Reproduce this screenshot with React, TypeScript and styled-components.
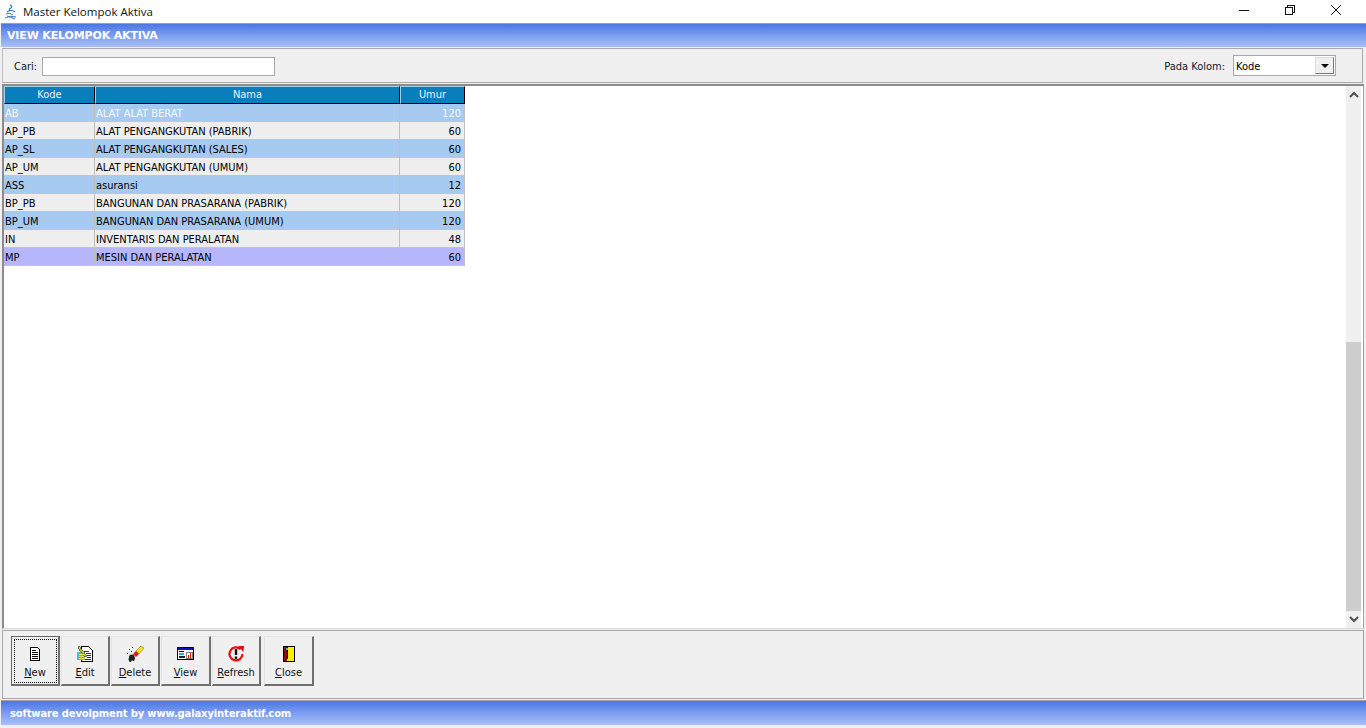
import React from 'react';
import styled, { createGlobalStyle } from 'styled-components';

const GlobalStyle = createGlobalStyle`
  html, body {
    margin: 0;
    padding: 0;
    background: #f0f0f0;
    overflow: hidden;
  }
`;

const UI_FONT = `"DejaVu Sans Condensed", "DejaVu Sans", sans-serif`;
const BOLD_FONT = `"DejaVu Sans", Verdana, sans-serif`;

const Window = styled.div`
  width: 1366px;
  height: 728px;
  display: flex;
  flex-direction: column;
  background: #f0f0f0;
  font-family: ${UI_FONT};
  font-stretch: condensed;
  font-size: 11px;
  color: #000;
`;

const TitleBar = styled.div`
  height: 23px;
  display: flex;
  align-items: center;
  background: #fff;
  padding: 0 7px 0 4px;
`;

const TitleText = styled.span`
  font-family: "Open Sans", sans-serif;
  font-stretch: normal;
  font-size: 11.5px;
  color: #111;
  margin-left: 5px;
  flex: 1;
`;

const WinButton = styled.div`
  width: 46px;
  height: 23px;
  padding-bottom: 3px;
  box-sizing: border-box;
  display: flex;
  align-items: center;
  justify-content: center;
`;

const Banner = styled.div<{ $h: number; $size: number; $pad: number; $top: number; $track: number }>`
  height: ${(p) => p.$h}px;
  margin: ${(p) => p.$top}px 0 0 1px;
  padding-left: ${(p) => p.$pad}px;
  border-top: 1px solid #a0a0a0;
  background: linear-gradient(180deg, #4a76e4 0%, #7c9df0 50%, #a9c0f6 100%);
  display: flex;
  align-items: center;
  color: #fff;
  font-family: ${BOLD_FONT};
  font-stretch: normal;
  font-weight: 700;
  font-size: ${(p) => p.$size}px;
  letter-spacing: ${(p) => p.$track}px;
  box-sizing: border-box;
`;

const SearchPanel = styled.div`
  height: 35px;
  margin: 1px 3px 0 2px;
  box-sizing: border-box;
  border: 1px solid #a8a8a8;
  border-left-color: #c0c0c0;
  display: flex;
  align-items: center;
  padding: 0 26px 0 11px;
  background: #f0f0f0;
`;

const Label = styled.span`
  color: #101828;
  margin-top: 2px;
`;

const SearchInput = styled.div`
  width: 233px;
  height: 19px;
  margin: 1px 0 0 5px;
  box-sizing: border-box;
  background: #fff;
  border: 1px solid #a8a8a8;
`;

const Spacer = styled.div`
  flex: 1;
`;

const ComboBox = styled.div`
  width: 103px;
  height: 21px;
  margin-left: 8px;
  box-sizing: border-box;
  background: #fff;
  border: 1px solid #a8a8a8;
  display: flex;
  align-items: center;
  justify-content: space-between;
  padding: 0 1px 0 2px;
`;

const ComboValue = styled.span`
  margin-top: 2px;
`;

const ComboArrow = styled.div`
  width: 19px;
  height: 17px;
  box-sizing: border-box;
  background: #f0f0f0;
  border: 1px solid #777;
  border-top-color: #ddd;
  border-left-color: #ddd;
  display: flex;
  align-items: center;
  justify-content: center;
  &::after {
    content: '';
    border-left: 4px solid transparent;
    border-right: 4px solid transparent;
    border-top: 4px solid #000;
  }
`;

const GridFrame = styled.div`
  height: 545px;
  margin: 1px 2px 0 2px;
  box-sizing: border-box;
  background: #fff;
  border-top: 2px solid #8c8c8c;
  border-left: 2px solid #8c8c8c;
  border-bottom: 1px solid #d8d8d8;
  border-right: 1px solid #a0a0a0;
  display: flex;
  justify-content: space-between;
`;

const Table = styled.div`
  width: 461px;
  display: flex;
  flex-direction: column;
`;

const Row = styled.div`
  display: grid;
  grid-template-columns: 91px 305px 65px;
  height: 18px;
  box-sizing: border-box;
`;

const HeadCell = styled.div`
  background: #0a7dbd;
  color: #e8f4fb;
  line-height: 15px;
  text-align: center;
  border: 1px solid #000;
  border-left-color: #9fd0ea;
  border-top-color: #9fd0ea;
  box-sizing: border-box;
`;

const Cell = styled.div<{ $bg: string; $color: string; $right?: boolean }>`
  background: ${(p) => p.$bg};
  color: ${(p) => p.$color};
  line-height: 20px;
  padding: 0 ${(p) => (p.$right ? '3px' : '0')} 0 1px;
  text-align: ${(p) => (p.$right ? 'right' : 'left')};
  border-right: 1px solid #bfbfbf;
  border-bottom: 1px solid #c4c4c4;
  box-sizing: border-box;
  white-space: nowrap;
  overflow: hidden;
`;

const Scrollbar = styled.div`
  width: 15px;
  margin-right: 2px;
  display: flex;
  flex-direction: column;
  background: #f0f0f0;
`;

const ScrollArrow = styled.div`
  height: 17px;
  display: flex;
  align-items: center;
  justify-content: center;
`;

const ScrollTrack = styled.div`
  height: 239px;
`;

const ScrollThumb = styled.div`
  flex: 1;
  background: #cdcdcd;
`;

const Toolbar = styled.div`
  height: 69px;
  margin: 1px 2px 0 2px;
  box-sizing: border-box;
  border: 1px solid #a8a8a8;
  border-right-color: #a0a0a0;
  display: flex;
  align-items: flex-start;
  padding: 5px 0 0 8px;
  background: #f0f0f0;
`;

const ToolButton = styled.div<{ $w: number; $gap: number; $focus?: boolean }>`
  width: ${(p) => p.$w}px;
  height: 50px;
  margin-right: ${(p) => p.$gap}px;
  box-sizing: border-box;
  background: #f0f0f0;
  position: relative;
  display: flex;
  flex-direction: column;
  align-items: center;
  border-top: 1px solid ${(p) => (p.$focus ? '#666' : '#e4e4e4')};
  border-left: 1px solid ${(p) => (p.$focus ? '#666' : '#e4e4e4')};
  border-right: 2px solid #6f6f6f;
  border-bottom: 2px solid #6f6f6f;
  padding-top: 8px;
  ${(p) =>
    p.$focus &&
    `&::after {
      content: '';
      position: absolute;
      inset: 2px 1px 1px 2px;
      border: 1px dotted #000;
    }`}
`;

const ToolIcon = styled.div`
  height: 18px;
  display: flex;
  align-items: center;
  justify-content: center;
`;

const ToolLabel = styled.span`
  margin-top: 3px;
  color: #101018;
  line-height: 14px;
`;

const Mnemonic = styled.span`
  text-decoration: underline;
`;

const AppIcon = () => (
  <svg width="14" height="16" viewBox="0 0 14 16">
    <path d="M6 1 Q9 2 7 4 Q4 5 6 7 M3 8 Q7 5 11 8" stroke="#1d6fb8" strokeWidth="1.1" fill="none" />
    <path d="M2 10 Q6 8 9 11 M1 14 Q6 11 12 13 M3 12 L11 15" stroke="#3a78c0" strokeWidth="1" fill="none" />
  </svg>
);

const NewIcon = () => (
  <svg width="16" height="16" viewBox="0 0 16 16" shapeRendering="crispEdges">
    <path d="M3.5 1.5H10.5L12.5 3.5V14.5H3.5Z" fill="#fff" stroke="#000" />
    <path d="M5 4.5H9M5 6.5H11M5 8.5H11M5 10.5H11M5 12.5H11" stroke="#000" />
  </svg>
);

const EditIcon = () => (
  <svg width="18" height="18" viewBox="0 0 18 18" shapeRendering="crispEdges">
    <path d="M5.5 1.5H12.5L16.5 5.5V16.5H5.5Z" fill="#fff" stroke="#000" />
    <path d="M8 6H13M10 8H15M11 10H15M11 12H15M8 14H15" stroke="#333" />
    <rect x="1" y="7" width="8" height="8" fill="#35c8d8" />
    <path d="M3 1L11 11L9 12L2 3Z" fill="#d8c020" stroke="#333" strokeWidth="0.6" />
    <path d="M3 9H9M3 11H8M3 13H9" stroke="#f0e040" />
  </svg>
);

const DeleteIcon = () => (
  <svg width="18" height="18" viewBox="0 0 18 18">
    <path d="M10 6L15 1L18 3L13 9Z" fill="#f6e020" stroke="#806000" strokeWidth="0.5" />
    <path d="M7 9L10 6L13 9L10 12Z" fill="#e01818" />
    <path d="M3 12C3 9 6 9 8 10L9 13C9 16 7 17 6 15L5 17C3 17 2 15 3 12Z" fill="#222" />
    <path d="M3 4h1v1H3zM6 2h1v1H6zM5 6h1v1H5zM1 8h1v1H1z" fill="#222" />
  </svg>
);

const ViewIcon = () => (
  <svg width="18" height="16" viewBox="0 0 18 16" shapeRendering="crispEdges">
    <rect x="0.5" y="1.5" width="16" height="12" fill="#fff" stroke="#000" />
    <rect x="1" y="2" width="15" height="2" fill="#1010c0" />
    <rect x="2" y="5" width="5" height="1" fill="#000" />
    <rect x="2" y="7" width="5" height="2" fill="#20b8c8" />
    <rect x="2" y="10" width="6" height="2" fill="#222" />
    <rect x="9" y="6" width="6" height="6" fill="#fff" stroke="#000" strokeWidth="0.5" />
    <rect x="11" y="9" width="1" height="3" fill="#d01010" />
    <rect x="13" y="7" width="1" height="5" fill="#d01010" />
  </svg>
);

const RefreshIcon = () => (
  <svg width="18" height="18" viewBox="0 0 18 18">
    <path d="M13.5 4.2A6.5 6.5 0 1 0 15.5 9" fill="none" stroke="#e80c0c" strokeWidth="2.2" />
    <path d="M11 1L17 1L16.5 7Z" fill="#e80c0c" />
    <rect x="7.8" y="4" width="2.4" height="6" fill="#111" />
    <rect x="7.8" y="11.5" width="2.4" height="2.4" fill="#111" />
  </svg>
);

const CloseIcon = () => (
  <svg width="14" height="18" viewBox="0 0 14 18" shapeRendering="crispEdges">
    <rect x="1.5" y="1.5" width="11" height="15" fill="#ffee00" stroke="#000" />
    <path d="M2 2H5V16H2Z" fill="#801010" />
    <rect x="5" y="1" width="1" height="13" fill="#000" />
    <rect x="4" y="3" width="2" height="2" fill="#30c0d0" />
  </svg>
);

const columns = [
  ['AB', 'ALAT ALAT BERAT', '120'],
  ['AP_PB', 'ALAT PENGANGKUTAN (PABRIK)', '60'],
  ['AP_SL', 'ALAT PENGANGKUTAN (SALES)', '60'],
  ['AP_UM', 'ALAT PENGANGKUTAN (UMUM)', '60'],
  ['ASS', 'asuransi', '12'],
  ['BP_PB', 'BANGUNAN DAN PRASARANA (PABRIK)', '120'],
  ['BP_UM', 'BANGUNAN DAN PRASARANA (UMUM)', '120'],
  ['IN', 'INVENTARIS DAN PERALATAN', '48'],
  ['MP', 'MESIN DAN PERALATAN', '60'],
];

const rowBg = (i: number) => {
  if (i === columns.length - 1) return '#b6b6fc';
  return i % 2 === 0 ? '#a6caf0' : '#eeeeee';
};

const buttons = [
  { key: 'N', rest: 'ew', icon: <NewIcon />, w: 49, gap: 1, focus: true },
  { key: 'E', rest: 'dit', icon: <EditIcon />, w: 49, gap: 1 },
  { key: 'D', rest: 'elete', icon: <DeleteIcon />, w: 49, gap: 1 },
  { key: 'V', rest: 'iew', icon: <ViewIcon />, w: 50, gap: 1 },
  { key: 'R', rest: 'efresh', icon: <RefreshIcon />, w: 49, gap: 3 },
  { key: 'C', rest: 'lose', icon: <CloseIcon />, w: 50, gap: 0 },
];

export default function App() {
  return (
    <Window>
      <GlobalStyle />
      <TitleBar>
        <AppIcon />
        <TitleText>Master Kelompok Aktiva</TitleText>
        <WinButton>
          <svg width="12" height="12" viewBox="0 0 12 12" shapeRendering="crispEdges">
            <path d="M1 6H11" stroke="#111" />
          </svg>
        </WinButton>
        <WinButton>
          <svg width="12" height="12" viewBox="0 0 12 12" shapeRendering="crispEdges">
            <path d="M1.5 3.5H8.5V10.5H1.5Z M3.5 3.5V1.5H10.5V8.5H8.5" fill="none" stroke="#111" />
          </svg>
        </WinButton>
        <WinButton>
          <svg width="12" height="12" viewBox="0 0 12 12">
            <path d="M1 1L11 11M11 1L1 11" stroke="#111" />
          </svg>
        </WinButton>
      </TitleBar>

      <Banner $h={24} $size={11} $pad={6} $top={0} $track={-0.15}>
        VIEW KELOMPOK AKTIVA
      </Banner>

      <SearchPanel>
        <Label>Cari:</Label>
        <SearchInput />
        <Spacer />
        <Label>Pada Kolom:</Label>
        <ComboBox>
          <ComboValue>Kode</ComboValue>
          <ComboArrow />
        </ComboBox>
      </SearchPanel>

      <GridFrame>
        <Table>
          <Row>
            <HeadCell>Kode</HeadCell>
            <HeadCell>Nama</HeadCell>
            <HeadCell>Umur</HeadCell>
          </Row>
          {columns.map((r, i) => {
            const color = i === 0 ? '#f4f8fc' : '#000';
            return (
              <Row key={r[0]}>
                <Cell $bg={rowBg(i)} $color={color}>{r[0]}</Cell>
                <Cell $bg={rowBg(i)} $color={color}>{r[1]}</Cell>
                <Cell $bg={rowBg(i)} $color={color} $right>{r[2]}</Cell>
              </Row>
            );
          })}
        </Table>
        <Scrollbar>
          <ScrollArrow>
            <svg width="10" height="7" viewBox="0 0 10 7">
              <path d="M1 6L5 2L9 6" fill="none" stroke="#505050" strokeWidth="2" />
            </svg>
          </ScrollArrow>
          <ScrollTrack />
          <ScrollThumb />
          <ScrollArrow>
            <svg width="10" height="7" viewBox="0 0 10 7">
              <path d="M1 1L5 5L9 1" fill="none" stroke="#505050" strokeWidth="2" />
            </svg>
          </ScrollArrow>
        </Scrollbar>
      </GridFrame>

      <Toolbar>
        {buttons.map((b) => (
          <ToolButton key={b.key} $w={b.w} $gap={b.gap} $focus={b.focus}>
            <ToolIcon>{b.icon}</ToolIcon>
            <ToolLabel>
              <Mnemonic>{b.key}</Mnemonic>
              {b.rest}
            </ToolLabel>
          </ToolButton>
        ))}
      </Toolbar>

      <Banner $h={25} $size={10} $pad={9} $top={1} $track={-0.15}>
        software devolpment by www.galaxyinteraktif.com
      </Banner>
    </Window>
  );
}
